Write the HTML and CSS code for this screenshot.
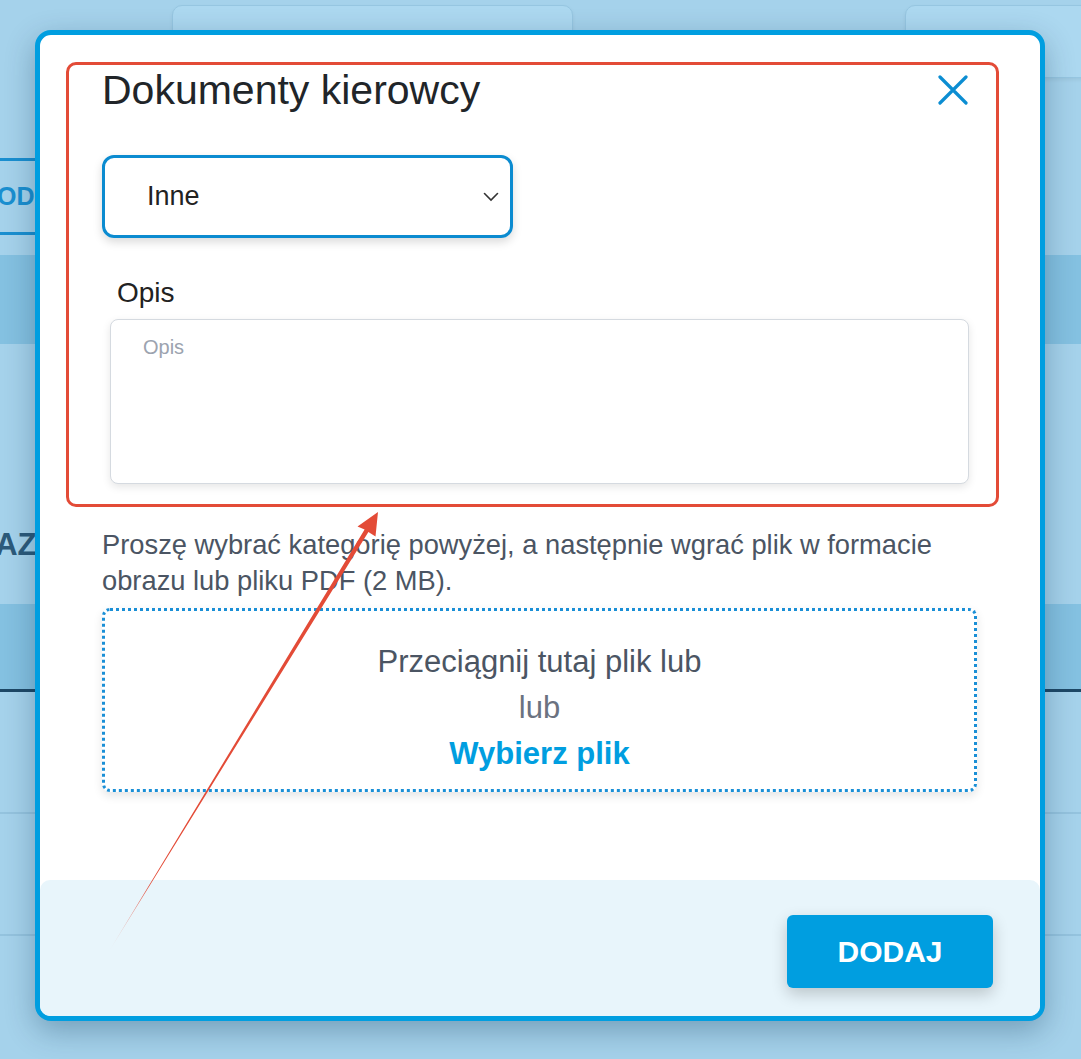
FILE: index.html
```html
<!DOCTYPE html>
<html lang="pl">
<head>
  <meta charset="UTF-8">
  <meta name="viewport" content="width=device-width, initial-scale=1.0">
  <title>Dokumenty kierowcy</title>
  <link rel="stylesheet" href="styles.css">
</head>
<body>
  <div class="page">
    <!-- strona pod spodem (przyciemniona) -->
    <div class="top-row">
      <div class="bg-card bg-card-a"></div>
      <div class="bg-card bg-card-b"></div>
    </div>
    <div class="toolbar">
      <span class="bg-btn">DODAJ</span>
    </div>
    <div class="band"></div>
    <div class="section">
      <span class="section-title">POKAZ</span>
    </div>
    <div class="band band-head"></div>
    <div class="row"></div>
    <div class="row"></div>
    <div class="row row-last"></div>

    <!-- modal -->
    <div class="modal">
      <div class="modal-body">
        <div class="modal-header">
          <h2 class="modal-title">Dokumenty kierowcy</h2>
          <button class="close-btn" aria-label="Zamknij">
            <svg width="30" height="30" viewBox="0 0 30 30">
              <path d="M2 2 L28 28 M28 2 L2 28" stroke="#0b8dd2" stroke-width="3.2" stroke-linecap="round" fill="none"/>
            </svg>
          </button>
        </div>

        <div class="select">
          <span>Inne</span>
          <svg width="16" height="10" viewBox="0 0 16 10">
            <path d="M1.5 1.5 L8 8 L14.5 1.5" stroke="#333" stroke-width="1.6" fill="none" stroke-linecap="round"/>
          </svg>
        </div>

        <label class="field-label" for="opis">Opis</label>
        <textarea id="opis" class="textarea" placeholder="Opis"></textarea>

        <p class="hint">Proszę wybrać kategorię powyżej, a następnie wgrać plik w formacie obrazu lub pliku PDF (2 MB).</p>

        <div class="dropzone">
          <div class="drop-main">Przeciągnij tutaj plik lub</div>
          <div class="drop-or">lub</div>
          <div class="drop-link">Wybierz plik</div>
        </div>
      </div>

      <div class="modal-footer">
        <button class="submit-btn">DODAJ</button>
      </div>
    </div>

    <!-- adnotacja -->
    <div class="annot-box"></div>
    <svg class="annot-arrow" width="1081" height="1059" viewBox="0 0 1081 1059">
      <defs>
        <linearGradient id="fade" gradientUnits="userSpaceOnUse" x1="108" y1="953" x2="378" y2="512">
          <stop offset="0" stop-color="#e34b37" stop-opacity="0"/>
          <stop offset="0.15" stop-color="#e34b37" stop-opacity="1"/>
          <stop offset="1" stop-color="#e34b37" stop-opacity="1"/>
        </linearGradient>
      </defs>
      <polygon fill="url(#fade)" points="108,953 364.6,529.6 357.5,526.5 378,512 375.5,536.5 368.4,532"/>
    </svg>
  </div>
</body>
</html>
```

FILE: styles.css
```css
* {
  box-sizing: border-box;
}

body {
  margin: 0;
  font-family: "Liberation Sans", Arial, sans-serif;
  background: #a5d2eb;
}

.page {
  position: relative;
  width: 1081px;
  height: 1059px;
  overflow: hidden;
  background: #a5d2eb;
}

/* tlo */
.top-row {
  display: flex;
  height: 80px;
  padding-top: 5px;
}

.bg-card {
  background: #acd8f0;
  border: 1px solid #96c6e1;
  border-radius: 10px;
  box-shadow: 0 2px 4px rgba(0, 0, 0, 0.06);
}

.bg-card-a {
  margin-left: 172px;
  width: 401px;
  height: 90px;
}

.bg-card-b {
  margin-left: auto;
  width: 190px;
  margin-right: -14px;
  height: 73px;
}

.toolbar {
  margin-top: 78px;
  height: 97px;
}

.bg-btn {
  display: inline-flex;
  align-items: center;
  margin-left: -40px;
  padding-left: 16px;
  width: 140px;
  height: 77px;
  border: 3px solid #1a8fd0;
  border-radius: 8px;
  color: #1a8fd0;
  font-weight: bold;
  font-size: 25px;
}

.band {
  height: 89px;
  background: #84c1e1;
}

.section {
  height: 260px;
  padding-top: 183px;
}

.section-title {
  display: block;
  margin-left: -72px;
  font-size: 31px;
  font-weight: bold;
  color: #2c5a7a;
  line-height: 36px;
}

.band-head {
  height: 88px;
  border-bottom: 3px solid #1e4866;
}

.row {
  height: 122px;
  border-bottom: 2px solid #94c3de;
}

.row-last {
  border-bottom: none;
}

/* modal */
.modal {
  position: absolute;
  left: 35px;
  top: 30px;
  width: 1010px;
  height: 991px;
  display: flex;
  flex-direction: column;
  background: #fff;
  border: 5px solid #009ee0;
  border-radius: 16px;
  box-shadow: 0 10px 30px rgba(0, 40, 70, 0.3);
}

.modal-body {
  padding: 31px 63px 0 62px;
  display: flex;
  flex-direction: column;
}

.modal-header {
  display: flex;
  justify-content: space-between;
  align-items: center;
}

.modal-title {
  margin: 0;
  font-size: 41px;
  line-height: 48px;
  font-weight: normal;
  color: #212529;
}

.close-btn {
  background: none;
  border: none;
  padding: 0;
  margin-right: 9px;
  width: 30px;
  height: 30px;
  cursor: pointer;
}

.close-btn svg {
  display: block;
}

.select {
  margin-top: 41px;
  width: 411px;
  height: 83px;
  display: flex;
  align-items: center;
  justify-content: space-between;
  padding: 0 11px 0 42px;
  border: 3px solid #0b8bd0;
  border-radius: 12px;
  font-size: 27px;
  color: #222;
  box-shadow: 0 4px 10px rgba(0, 0, 0, 0.15);
}

.field-label {
  margin: 38px 0 0 15px;
  font-size: 28px;
  line-height: 34px;
  color: #222;
}

.textarea {
  display: block;
  margin: 9px 8px 0 8px;
  height: 165px;
  padding: 15px 32px;
  border: 1px solid #d5dae0;
  border-radius: 8px;
  font-family: "Liberation Sans", Arial, sans-serif;
  font-size: 20px;
  line-height: 24px;
  color: #222;
  resize: none;
  box-shadow: 0 3px 8px rgba(0, 0, 0, 0.1);
}

.textarea::placeholder {
  color: #9ca3af;
}

.hint {
  margin: 43px 0 0;
  font-size: 27.3px;
  line-height: 36px;
  color: #4b5563;
}

.dropzone {
  margin-top: 9px;
  height: 184px;
  padding-top: 28px;
  border: 3px dotted #1a8fd6;
  border-radius: 8px;
  text-align: center;
  font-size: 31px;
  line-height: 46px;
  box-shadow: 0 4px 10px rgba(0, 0, 0, 0.1);
}

.drop-main {
  color: #4b5563;
}

.drop-or {
  color: #6b7280;
}

.drop-link {
  color: #009ee0;
  font-weight: bold;
}

.modal-footer {
  margin-top: auto;
  height: 136px;
  display: flex;
  justify-content: flex-end;
  align-items: flex-start;
  padding: 35px 47px 0 0;
  background: #e8f5fb;
  border-radius: 10px;
}

.submit-btn {
  width: 206px;
  height: 73px;
  background: #009ee0;
  color: #fff;
  border: none;
  border-radius: 6px;
  font-family: "Liberation Sans", Arial, sans-serif;
  font-size: 30px;
  font-weight: bold;
  box-shadow: 0 6px 16px rgba(0, 0, 0, 0.2);
  cursor: pointer;
}

/* adnotacja */
.annot-box {
  position: absolute;
  left: 66px;
  top: 62px;
  width: 933px;
  height: 445px;
  border: 3px solid #e34b37;
  border-radius: 10px;
  pointer-events: none;
}

.annot-arrow {
  position: absolute;
  left: 0;
  top: 0;
  pointer-events: none;
}
```
